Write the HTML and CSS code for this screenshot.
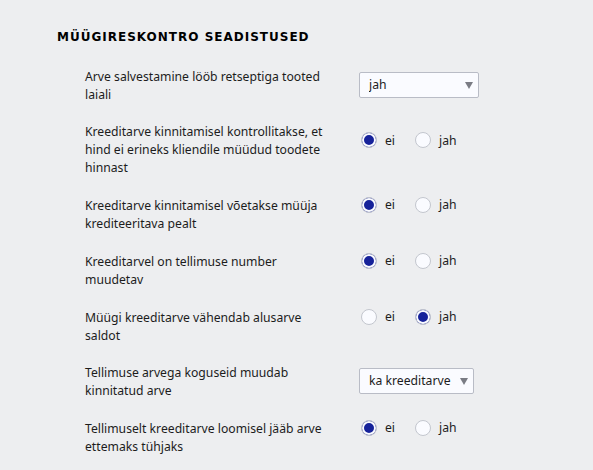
FILE: index.html
```html
<!DOCTYPE html>
<html lang="et">
<head>
    <meta charset="UTF-8">
    <meta name="viewport" content="width=device-width, initial-scale=1.0">
    <title>Müügireskontro seadistused</title>
    <link rel="stylesheet" href="styles.css">
</head>
<body>
    <div class="section">
        <h2>Müügireskontro seadistused</h2>

        <div class="settings">
            <div class="setting">
                <div class="label">Arve salvestamine lööb retseptiga tooted laiali</div>
                <div class="control">
                    <div class="select-wrap">
                        <select class="select select-wide">
                            <option>jah</option>
                            <option>ei</option>
                        </select>
                    </div>
                </div>
            </div>

            <div class="setting">
                <div class="label">Kreeditarve kinnitamisel kontrollitakse, et hind ei erineks kliendile müüdud toodete hinnast</div>
                <div class="control radios">
                    <label><input type="radio" name="r1" checked> ei</label>
                    <label><input type="radio" name="r1"> jah</label>
                </div>
            </div>

            <div class="setting">
                <div class="label">Kreeditarve kinnitamisel võetakse müüja krediteeritava pealt</div>
                <div class="control radios">
                    <label><input type="radio" name="r2" checked> ei</label>
                    <label><input type="radio" name="r2"> jah</label>
                </div>
            </div>

            <div class="setting">
                <div class="label">Kreeditarvel on tellimuse number muudetav</div>
                <div class="control radios">
                    <label><input type="radio" name="r3" checked> ei</label>
                    <label><input type="radio" name="r3"> jah</label>
                </div>
            </div>

            <div class="setting">
                <div class="label">Müügi kreeditarve vähendab alusarve saldot</div>
                <div class="control radios">
                    <label><input type="radio" name="r4"> ei</label>
                    <label><input type="radio" name="r4" checked> jah</label>
                </div>
            </div>

            <div class="setting">
                <div class="label">Tellimuse arvega koguseid muudab kinnitatud arve</div>
                <div class="control">
                    <div class="select-wrap">
                        <select class="select">
                            <option>ka kreeditarve</option>
                            <option>ainult arve</option>
                        </select>
                    </div>
                </div>
            </div>

            <div class="setting">
                <div class="label">Tellimuselt kreeditarve loomisel jääb arve ettemaks tühjaks</div>
                <div class="control radios">
                    <label><input type="radio" name="r5" checked> ei</label>
                    <label><input type="radio" name="r5"> jah</label>
                </div>
            </div>
        </div>
    </div>
</body>
</html>
```

FILE: styles.css
```css
body {
    margin: 0;
    background-color: #edeef0;
    font-family: "Noto Sans", "Open Sans", sans-serif;
    font-size: 12.2px;
    color: #1c1c1c;
}
.section {
    padding: 30px 0 0 57px;
}
h2 {
    margin: 0 0 24px;
    font-family: "DejaVu Sans", Verdana, sans-serif;
    font-size: 12px;
    font-weight: bold;
    text-transform: uppercase;
    letter-spacing: 1px;
    color: #000;
    line-height: 14px;
}
.settings {
    padding-left: 28px;
}
.setting {
    display: flex;
    align-items: center;
    margin-bottom: 19px;
}
.label {
    width: 250px;
    margin-right: 24px;
    line-height: 18px;
}
.control {
    flex: none;
}
.radios {
    display: flex;
    padding-bottom: 20px;
}
.radios label {
    display: flex;
    align-items: center;
    margin-right: 18px;
    cursor: pointer;
}
.radios input {
    appearance: none;
    width: 16px;
    height: 16px;
    margin: 0 8px 0 2px;
    border: 1px solid #c3c6ce;
    border-radius: 50%;
    background-color: #fafbff;
}
.radios input:checked {
    background-color: #16229a;
    box-shadow: inset 0 0 0 2px #fafbff;
}
.select-wrap {
    position: relative;
    margin-bottom: 3px;
}
.select-wrap::after {
    content: "";
    position: absolute;
    right: 6px;
    top: 10px;
    border-left: 4px solid transparent;
    border-right: 4px solid transparent;
    border-top: 7px solid #7a7c84;
    pointer-events: none;
}
.select {
    appearance: none;
    height: 26px;
    padding: 0 22px 0 9px;
    border: 1px solid #b9bcc6;
    border-radius: 2px;
    background-color: #fafbff;
    font-family: inherit;
    font-size: inherit;
    color: #1c1c1c;
}
.select-wide {
    width: 120px;
}
```
